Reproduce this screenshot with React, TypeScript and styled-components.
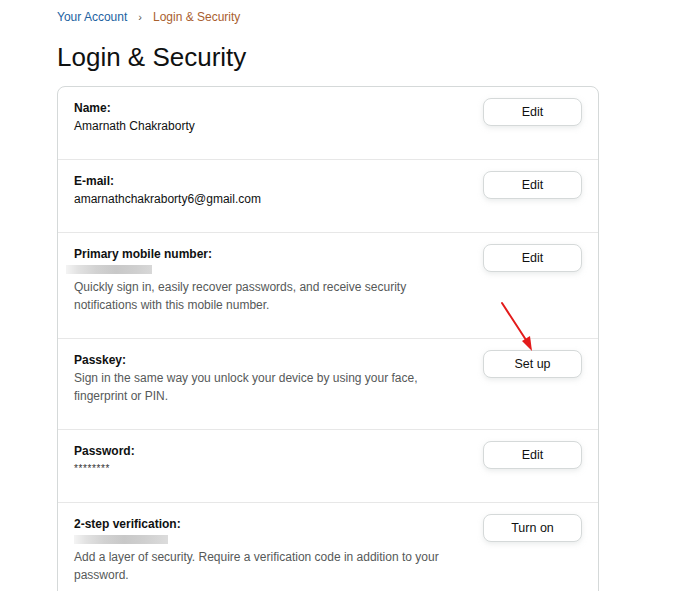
import * as React from "react";
import styled, { createGlobalStyle } from "styled-components";

const GlobalStyle = createGlobalStyle`
  body {
    margin: 0;
    background: #ffffff;
    font-family: "Liberation Sans", Arial, sans-serif;
    color: #0f1111;
  }
`;

const Page = styled.div`
  padding: 8px 0 0 57px;
  width: 542px;
`;

const Breadcrumb = styled.div`
  display: flex;
  align-items: center;
  gap: 11px;
  font-size: 12px;
  line-height: 18px;
`;

const Crumb = styled.span<{ $current?: boolean }>`
  color: ${p => (p.$current ? "#a9602f" : "#2162a1")};
`;

const Sep = styled.span`
  color: #555;
  font-size: 11px;
`;

const Title = styled.h1`
  margin: 15px 0 13px;
  font-size: 26px;
  line-height: 32px;
  font-weight: 400;
`;

const Card = styled.div`
  position: relative;
  border: 1px solid #d5d9d9;
  border-radius: 8px;
  overflow: hidden;
`;

const Row = styled.div`
  display: flex;
  justify-content: space-between;
  align-items: flex-start;
  padding: 12px 16px 24px 16px;
  border-top: 1px solid #e7e7e7;
  &:first-child {
    border-top: none;
  }
`;

const Info = styled.div`
  display: flex;
  flex-direction: column;
  max-width: 380px;
  font-size: 12px;
  line-height: 18px;
`;

const Label = styled.div`
  font-weight: 700;
  color: #0f1111;
`;

const Value = styled.div`
  color: #0f1111;
`;

const Stars = styled.div`
  font-size: 10px;
  color: #333;
  letter-spacing: 0.6px;
`;

const Desc = styled.div`
  color: #565959;
`;

const Blur = styled.div<{ $offset: number }>`
  height: 9px;
  width: ${p => 94 - p.$offset}px;
  margin: 2px 0 4px ${p => -p.$offset}px;
  background: linear-gradient(
    90deg,
    #f4f4f4 0px,
    #e2e2e2 12px,
    #d2d2d2 30px,
    #c8c8c8 50px,
    #cfcfcf 70px,
    #dcdcdc 94px
  );
`;

const Button = styled.button`
  width: 99px;
  height: 28px;
  flex-shrink: 0;
  margin-top: -1px;
  background: #fff;
  border: 1px solid #d5d9d9;
  border-radius: 8px;
  box-shadow: 0 2px 5px rgba(213, 217, 217, 0.5);
  font-family: inherit;
  font-size: 12.5px;
  color: #0f1111;
  cursor: pointer;
`;

const Arrow = styled.svg`
  position: absolute;
  left: 440px;
  top: 212px;
  pointer-events: none;
`;

export default function App() {
  return (
    <>
      <GlobalStyle />
      <Page>
        <Breadcrumb>
          <Crumb>Your Account</Crumb>
          <Sep>›</Sep>
          <Crumb $current>Login &amp; Security</Crumb>
        </Breadcrumb>
        <Title>Login &amp; Security</Title>
        <Card>
          <Row>
            <Info>
              <Label>Name:</Label>
              <Value>Amarnath Chakraborty</Value>
            </Info>
            <Button>Edit</Button>
          </Row>
          <Row>
            <Info>
              <Label>E-mail:</Label>
              <Value>amarnathchakraborty6@gmail.com</Value>
            </Info>
            <Button>Edit</Button>
          </Row>
          <Row>
            <Info>
              <Label>Primary mobile number:</Label>
              <Blur $offset={8} />
              <Desc>
                Quickly sign in, easily recover passwords, and receive security
                <br />
                notifications with this mobile number.
              </Desc>
            </Info>
            <Button>Edit</Button>
          </Row>
          <Row>
            <Info>
              <Label>Passkey:</Label>
              <Desc>
                Sign in the same way you unlock your device by using your face,
                <br />
                fingerprint or PIN.
              </Desc>
            </Info>
            <Button>Set up</Button>
          </Row>
          <Row>
            <Info>
              <Label>Password:</Label>
              <Stars>********</Stars>
            </Info>
            <Button>Edit</Button>
          </Row>
          <Row>
            <Info>
              <Label>2-step verification:</Label>
              <Blur $offset={0} />
              <Desc>
                Add a layer of security. Require a verification code in addition
                to your
                <br />
                password.
              </Desc>
            </Info>
            <Button>Turn on</Button>
          </Row>
          <Arrow width="40" height="56" viewBox="0 0 40 56">
            <line x1="4" y1="4" x2="30" y2="44" stroke="#e31b1b" strokeWidth="2" strokeLinecap="round" />
            <polygon points="34,52 24,42 32,37" fill="#e31b1b" />
          </Arrow>
        </Card>
      </Page>
    </>
  );
}
